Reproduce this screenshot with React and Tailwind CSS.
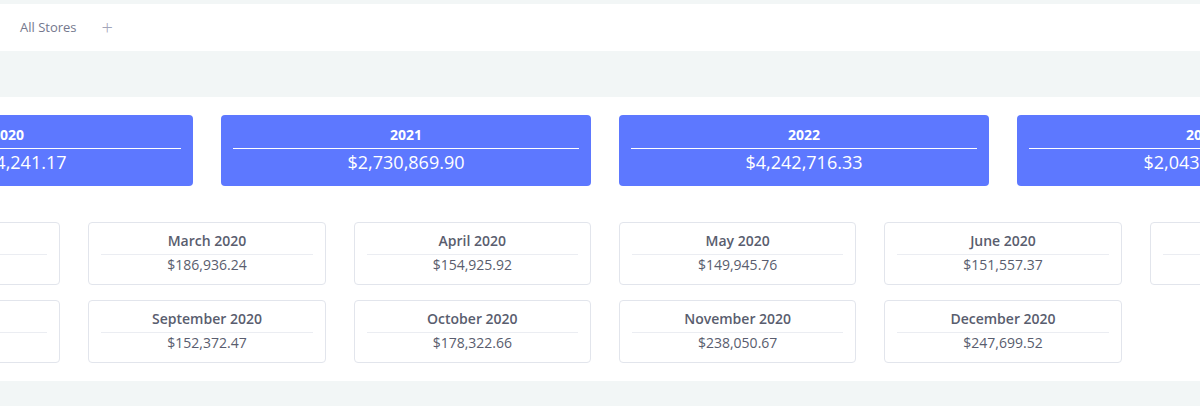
import React from "react";

const years = [
  { y: "2020", v: "$1,984,241.17" },
  { y: "2021", v: "$2,730,869.90" },
  { y: "2022", v: "$4,242,716.33" },
  { y: "2023", v: "$2,043,518.06" },
];

const months = [
  { m: "February 2020", v: "$142,318.55" },
  { m: "March 2020", v: "$186,936.24" },
  { m: "April 2020", v: "$154,925.92" },
  { m: "May 2020", v: "$149,945.76" },
  { m: "June 2020", v: "$151,557.37" },
  { m: "July 2020", v: "$163,204.81" },
  { m: "August 2020", v: "$158,726.04" },
  { m: "September 2020", v: "$152,372.47" },
  { m: "October 2020", v: "$178,322.66" },
  { m: "November 2020", v: "$238,050.67" },
  { m: "December 2020", v: "$247,699.52" },
];

export default function App() {
  return (
    <div
      className="min-h-screen bg-[#f2f6f6] pt-[4px] overflow-hidden"
      style={{ fontFamily: '"Open Sans", "Liberation Sans", sans-serif' }}
    >
      <div className="h-[47px] bg-white flex items-center pl-5">
        <span className="text-[13px] text-[#74788d]">All Stores</span>
        <span className="ml-[25px] text-[#a2a5b9] text-[20px] font-light leading-none">+</span>
      </div>
      <div className="mt-[46px] bg-white py-[18px]">
        <div className="w-[1564px] ml-[-177px]">
          <div className="grid grid-cols-4 gap-x-[28px]">
            {years.map((c) => (
              <div key={c.y} className="h-[71px] rounded-[4px] bg-[#5d78ff] px-3 pt-[10px] text-white text-center">
                <div className="text-[14px] font-bold leading-[20px]">{c.y}</div>
                <div className="mt-[3px] h-px bg-white" />
                <div className="text-[18px] leading-[26px]">{c.v}</div>
              </div>
            ))}
          </div>
          <div className="mt-[36px] grid grid-cols-6 gap-x-[28px] gap-y-[15px]">
            {months.map((c) => (
              <div key={c.m} className="h-[63px] rounded-[4px] border border-[#e2e5ec] px-3 pt-[8px] text-center text-[#595d6e]">
                <div className="text-[14px] font-semibold leading-[20px]">{c.m}</div>
                <div className="mt-[3px] h-px bg-[#ebedf2]" />
                <div className="text-[14px] leading-[20px]">{c.v}</div>
              </div>
            ))}
          </div>
        </div>
      </div>
    </div>
  );
}
